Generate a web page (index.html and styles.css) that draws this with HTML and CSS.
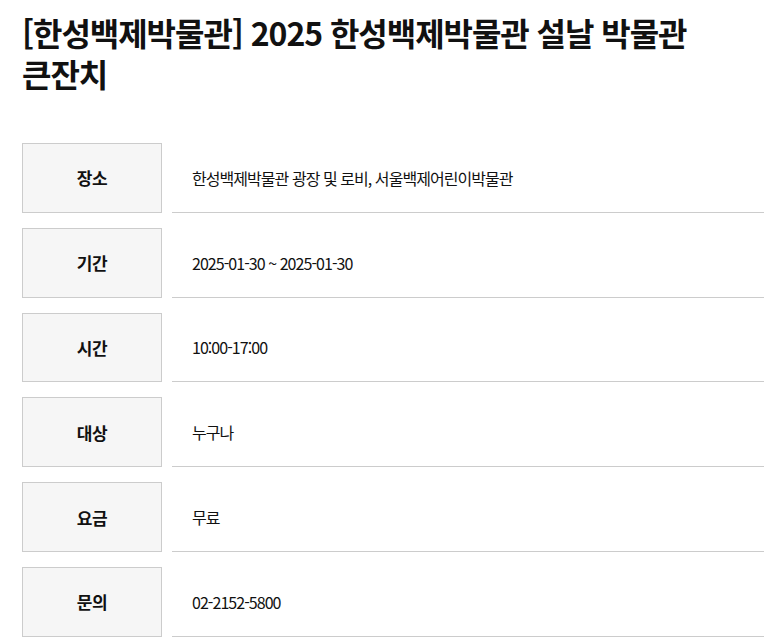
FILE: index.html
```html
<!DOCTYPE html>
<html lang="ko">
<head>
<meta charset="utf-8">
<link rel="stylesheet" href="styles.css">
</head>
<body>
<div class="page">
  <h1 class="title">[한성백제박물관] 2025 한성백제박물관 설날 박물관 큰잔치</h1>
  <div class="info">
    <div class="row"><div class="label">장소</div><div class="value">한성백제박물관 광장 및 로비, 서울백제어린이박물관</div></div>
    <div class="row"><div class="label">기간</div><div class="value">2025-01-30 ~ 2025-01-30</div></div>
    <div class="row"><div class="label">시간</div><div class="value">10:00-17:00</div></div>
    <div class="row"><div class="label">대상</div><div class="value">누구나</div></div>
    <div class="row"><div class="label">요금</div><div class="value">무료</div></div>
    <div class="row"><div class="label">문의</div><div class="value">02-2152-5800</div></div>
  </div>
</div>
</body>
</html>
```
FILE: styles.css
```css
html, body { margin: 0; padding: 0; background: #fff; }
body { font-family: "Noto Sans CJK KR", "Noto Sans", sans-serif; color: #111; }
.page { padding: 12px 16px 0 22px; }
.title {
  margin: 0;
  font-size: 32px;
  font-weight: 700;
  line-height: 41px;
  letter-spacing: -1.05px;
  word-break: keep-all;
  color: #111;
}
.info {
  margin-top: 49px;
  display: flex;
  flex-direction: column;
  gap: 15px;
}
.row {
  display: flex;
  height: 69.8px;
  gap: 10px;
}
.label {
  width: 138px;
  flex: none;
  border: 1px solid #cccccc;
  background: #f6f6f6;
  display: flex;
  align-items: center;
  justify-content: center;
  font-size: 17px;
  font-weight: 700;
  letter-spacing: -0.5px;
}
.value {
  flex: 1;
  border-bottom: 1px solid #cccccc;
  display: flex;
  align-items: center;
  padding-left: 20px;
  padding-top: 1px;
  font-size: 16px;
  letter-spacing: -0.95px;
}
```
